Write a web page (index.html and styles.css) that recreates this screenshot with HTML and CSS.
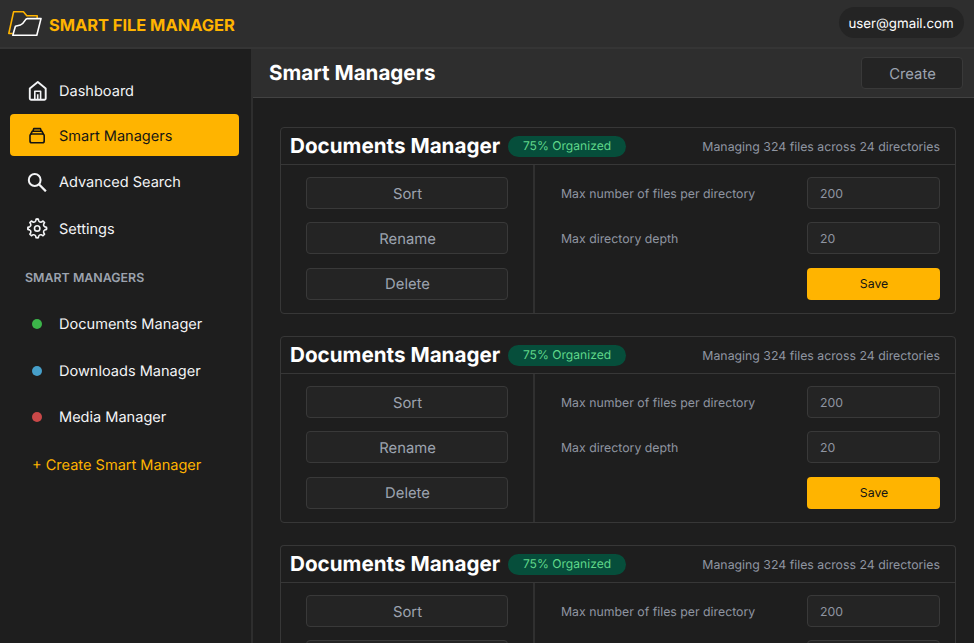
FILE: index.html
```html
<!DOCTYPE html>
<html lang="en">
<head>
<meta charset="utf-8">
<title>Smart File Manager</title>
<link rel="stylesheet" href="styles.css">
</head>
<body>
<header class="topbar">
  <div class="brand">
    <svg class="logo" viewBox="0 0 36 30" fill="none" stroke-width="1.6" stroke-linejoin="round">
      <path d="M5.500 25.500H1.800L6.600 3.800h9.800l3.400 3.900h10.400v3" stroke="#ffb400"/>
      <path d="M5.800 27.200h24L34 10.600H20.200c-2.600 0-2.800 5.400-6.800 6.400L8.400 18.200z" stroke="#fff"/>
    </svg>
    <span class="brand-name">SMART FILE MANAGER</span>
  </div>
  <div class="user">user@gmail.com</div>
</header>
<div class="layout">
  <aside class="sidebar">
    <nav class="nav">
      <a class="nav-item">
        <svg class="icon" viewBox="0 0 22 22" fill="none" stroke="currentColor" stroke-width="1.9" stroke-linejoin="round"><path d="M3.800 9.400 11.800 3.100l7.900 6.300v10.200a1.200 1.200 0 0 1-1.200 1.200H5a1.200 1.200 0 0 1-1.200-1.200z"/><path d="M8.800 20.800v-8.600h5.800v8.600M11.700 15.300v5.500" stroke-width="1.600"/></svg>
        <span>Dashboard</span>
      </a>
      <a class="nav-item active">
        <svg class="icon" viewBox="0 0 22 22" fill="none" stroke="currentColor" stroke-width="1.600" stroke-linejoin="round"><rect x="4" y="10" width="14.200" height="8.800" rx="1.800"/><path d="M4.700 10.400 6.300 7.200h9.600l1.600 3.200M7 7 7.800 4.600h6.600l.8 2.400"/></svg>
        <span>Smart Managers</span>
      </a>
      <a class="nav-item">
        <svg class="icon" viewBox="0 0 22 22" fill="none" stroke="currentColor" stroke-width="2"><circle cx="8.700" cy="10" r="5.900"/><path d="m12.900 14.300 7 7" stroke-width="2.300"/></svg>
        <span>Advanced Search</span>
      </a>
      <a class="nav-item">
        <svg class="icon" viewBox="0 0 22 22" fill="none" stroke="currentColor" stroke-width="1.600" stroke-linejoin="round" stroke-linecap="round">
          <g transform="translate(11.200 11.400)">
            <circle r="2.700"/>
            <path id="cog" d="M0-9.300H1.100L1.500-7.600Q2.400-5.900 4.310-6.430L5.800-7.350 7.350-5.800 6.430-4.310Q5.870-2.400 7.600-1.500L9.300-1.100V0"/>
            <use href="#cog" transform="rotate(90)"/><use href="#cog" transform="rotate(180)"/><use href="#cog" transform="rotate(270)"/>
          </g>
        </svg>
        <span>Settings</span>
      </a>
    </nav>
    <h2 class="section">SMART MANAGERS</h2>
    <ul class="managers">
      <li><i class="dot green"></i><span>Documents Manager</span></li>
      <li><i class="dot blue"></i><span>Downloads Manager</span></li>
      <li><i class="dot red"></i><span>Media Manager</span></li>
    </ul>
    <a class="create-link">+ Create Smart Manager</a>
  </aside>
  <main class="main">
    <div class="page-head">
      <h1>Smart Managers</h1>
      <button class="btn create">Create</button>
    </div>
    <div class="cards">
      <section class="card">
        <div class="card-head"><h3>Documents Manager</h3><span class="badge">75% Organized</span><span class="summary">Managing 324 files across 24 directories</span></div>
        <div class="card-body">
          <div class="actions"><button class="btn">Sort</button><button class="btn">Rename</button><button class="btn">Delete</button></div>
          <div class="form">
            <label>Max number of files per directory</label><div class="field">200</div>
            <label>Max directory depth</label><div class="field">20</div>
            <button class="save">Save</button>
          </div>
        </div>
      </section>
      <section class="card">
        <div class="card-head"><h3>Documents Manager</h3><span class="badge">75% Organized</span><span class="summary">Managing 324 files across 24 directories</span></div>
        <div class="card-body">
          <div class="actions"><button class="btn">Sort</button><button class="btn">Rename</button><button class="btn">Delete</button></div>
          <div class="form">
            <label>Max number of files per directory</label><div class="field">200</div>
            <label>Max directory depth</label><div class="field">20</div>
            <button class="save">Save</button>
          </div>
        </div>
      </section>
      <section class="card clipped">
        <div class="card-head"><h3>Documents Manager</h3><span class="badge">75% Organized</span><span class="summary">Managing 324 files across 24 directories</span></div>
        <div class="card-body">
          <div class="actions"><button class="btn">Sort</button><div class="btn"></div></div>
          <div class="form">
            <label>Max number of files per directory</label><div class="field">200</div>
            <span></span><div class="field"></div>
          </div>
        </div>
      </section>
    </div>
  </main>
</div>
</body>
</html>
```
FILE: styles.css
```css
* { box-sizing: border-box; margin: 0; padding: 0; }
body {
  height: 643px;
  overflow: hidden;
  display: flex;
  flex-direction: column;
  background: #1e1e1e;
  color: #f3f4f6;
  font-family: Inter, "Liberation Sans", sans-serif;
  text-rendering: geometricPrecision;
}
button { font: inherit; text-rendering: inherit; }

.topbar {
  flex: none;
  height: 49px;
  padding: 0 10px 2px 7px;
  display: flex;
  align-items: center;
  justify-content: space-between;
  background: #2e2e2e;
  border-bottom: 2px solid #353535;
}
.brand { display: flex; align-items: center; gap: 6px; padding-top: 4px; }
.logo { width: 36px; height: 30px; margin-top: -3px; }
.brand-name { padding-top: 1px; font-size: 16.450px; font-weight: 700; letter-spacing: -0.030px; color: #ffb400; line-height: 24px; }
.user {
  height: 31px;
  line-height: 34px;
  width: 125px;
  padding-right: 1px;
  text-align: center;
  border-radius: 16px;
  background: #242424;
  font-size: 13.300px;
  color: #fff;
}

.layout { flex: 1; min-height: 0; display: flex; }
.sidebar {
  flex: none;
  width: 253px;
  padding: 19px 12px 0 10px;
  border-right: 2px solid #2e2e2e;
  font-size: 14.550px;
}
.nav { display: flex; flex-direction: column; gap: 4px; }
.nav-item {
  height: 42px;
  padding-left: 16px;
  display: flex;
  align-items: center;
  gap: 11px;
  border-radius: 4px;
}
.nav-item span { padding-top: 2px; }
.nav-item:first-child { padding-top: 2px; }
.nav-item:last-child { margin-top: 1px; }
.nav-item.active { background: #ffb400; color: #141414; }
.icon { width: 22px; height: 22px; }
.section {
  margin: 21px 0 0 15px;
  font-size: 12.400px;
  line-height: 16px;
  font-weight: 600;
  color: #9ca3af;
}
.managers { list-style: none; margin-top: 15px; }
.managers li { height: 46.500px; display: flex; align-items: center; }
.dot { width: 10px; height: 10px; margin: 0 17px 0 22px; border-radius: 50%; }
.green { background: #3cb54a; }
.blue { background: #469fc9; }
.red { background: #c94848; }
.create-link { display: block; margin: 14px 0 0 22px; line-height: 21px; color: #ffb400; }

.main { flex: 1; min-width: 0; }
.page-head {
  height: 49px;
  padding: 0 11px 0 16px;
  display: flex;
  align-items: center;
  justify-content: space-between;
  background: #2e2e2e;
  border-bottom: 1px solid #424242;
}
h1 { font-size: 20.600px; line-height: 26px; font-weight: 700; color: #fff; }
.btn {
  height: 32px;
  padding: 1px 0 0 1px;
  border: 1px solid #393939;
  border-radius: 4px;
  background: #242424;
  color: #9ca3af;
  font-size: 14.800px;
}
.create { width: 102px; }

.cards { padding: 29px 18px 0 27px; display: flex; flex-direction: column; gap: 22px; }
.card { height: 187px; border: 1px solid #373737; border-radius: 4px; }
.card.clipped { height: 98px; overflow: hidden; border-bottom: 0; border-radius: 4px 4px 0 0; }
.card-head {
  height: 37px;
  padding: 0 15px 0 9px;
  display: flex;
  align-items: center;
  border-bottom: 1px solid #373737;
}
h3 { width: 210px; white-space: nowrap; font-size: 20.650px; line-height: 26px; font-weight: 700; color: #fff; }
.badge {
  width: 118px;
  height: 21px;
  margin-left: 8px;
  border-radius: 11px;
  background: #064e3b;
  color: #5fd78a;
  font-size: 12.100px;
  line-height: 20px;
  text-align: center;
}
.summary { margin-left: auto; font-size: 12.300px; color: #8f95a1; }
.card-body { height: 148px; display: grid; grid-template-columns: 254px 1fr; }
.actions {
  padding: 12px 25px 0;
  display: flex;
  flex-direction: column;
  gap: 13.400px;
  border-right: 2px solid #303030;
}
.form {
  padding: 12px 15px 0 26px;
  display: grid;
  grid-template-columns: 1fr 133px;
  grid-auto-rows: 32px;
  row-gap: 13.400px;
  align-items: center;
  align-content: start;
  font-size: 12.300px;
  color: #8f95a1;
}
.field {
  height: 32px;
  padding-left: 12px;
  line-height: 31px;
  border: 1px solid #393939;
  border-radius: 4px;
  background: #242424;
}
.save {
  grid-column: 2;
  height: 32px;
  padding-left: 1px;
  border: 0;
  border-radius: 4px;
  background: #ffb400;
  color: #141414;
}
```
